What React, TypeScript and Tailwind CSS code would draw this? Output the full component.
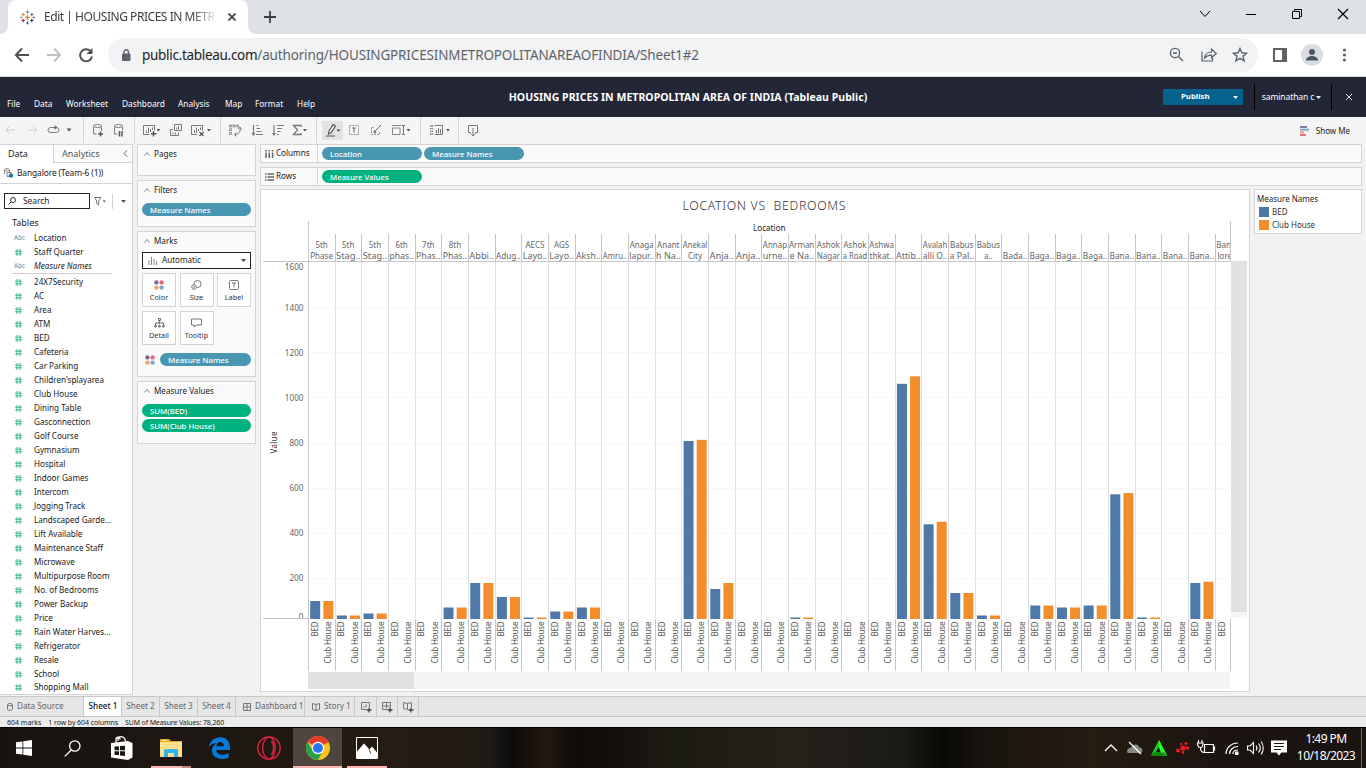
import React from "react";

const ui = "font-['Noto_Sans',sans-serif]";

const C = ({ className = "" }: { className?: string }) => (
  <svg width="5" height="3" viewBox="0 0 5 3" className={className}><path d="M0 0h5L2.500 3z" fill="currentColor" /></svg>
);

/* ---------- browser frame ---------- */

function TableauLogo() {
  const plus = (x: number, y: number, r: number, c: string, w = 1.4) => (
    <path d={`M${x - r} ${y}h${2 * r}M${x} ${y - r}v${2 * r}`} stroke={c} strokeWidth={w} />
  );
  return (
    <svg width="15" height="15" viewBox="0 0 15 15" fill="none">
      {plus(7.5, 7.5, 2.2, "#e8762d", 1.3)}
      {plus(7.5, 2, 1.6, "#5b879b", 1)}
      {plus(7.5, 13, 1.6, "#5b6591", 1)}
      {plus(3.2, 4.5, 1.7, "#eb912c", 1.2)}
      {plus(11.8, 4.5, 1.7, "#59879b", 1.2)}
      {plus(3.2, 10.5, 1.7, "#c72035", 1.2)}
      {plus(11.8, 10.5, 1.7, "#1f447e", 1.2)}
      {plus(1.2, 7.5, 1.1, "#7199a6", 0.9)}
      {plus(13.8, 7.5, 1.1, "#5c6692", 0.9)}
    </svg>
  );
}

function TabStrip() {
  return (
    <div className="flex h-[34px] shrink-0 bg-[#dee1e6]">
      <div className="w-2 bg-white"><div className="h-full rounded-br-lg bg-[#dee1e6]" /></div>
      <div className="flex w-[240px] items-center rounded-t-lg bg-white pl-3">
        <TableauLogo />
        <div className="ml-[9px] w-[172px] whitespace-nowrap text-[12px] tracking-[-0.46px] text-[#3c4043] [mask-image:linear-gradient(to_right,black_148px,transparent_174px)]">
          Edit | HOUSING PRICES IN METR
        </div>
        <svg width="8" height="8" viewBox="0 0 8 8" className="ml-[12px]"><path d="M.5 .5l7 7M7.500 .5l-7 7" stroke="#3c4043" strokeWidth="1.700" /></svg>
      </div>
      <div className="w-2 bg-white"><div className="h-full rounded-bl-lg bg-[#dee1e6]" /></div>
      <div className="flex flex-1 items-center pl-2">
        <svg width="12" height="12" viewBox="0 0 12 12"><path d="M6 0v12M0 6h12" stroke="#3c4043" strokeWidth="1.800" /></svg>
      </div>
      <div className="flex h-7 w-[184px] items-center text-black">
        <svg width="46" height="12" viewBox="0 0 46 12" fill="none" stroke="currentColor"><path d="M18 3l5 5.500 5-5.500" /></svg>
        <svg width="46" height="12" viewBox="0 0 46 12" fill="none" stroke="currentColor"><path d="M18 6.500h10" /></svg>
        <svg width="46" height="12" viewBox="0 0 46 12" fill="none" stroke="currentColor"><path d="M18.500 3.500h7v7h-7zM20.500 3.500v-2h7v7h-2" /></svg>
        <svg width="46" height="12" viewBox="0 0 46 12" fill="none" stroke="currentColor" strokeWidth="1.200"><path d="M18 1l10 10M28 1l-10 10" /></svg>
      </div>
    </div>
  );
}

function AddressBar() {
  return (
    <div className="flex h-[43px] shrink-0 items-center border-b border-[#d5d8dc] bg-white text-[#5f6368]">
      <svg width="108" height="20" viewBox="0 0 108 20" fill="none" strokeWidth="1.900">
        <path d="M29 10H16M22 3.500L15.800 10l6.200 6.500" stroke="#4d5156" />
        <path d="M47 10h13M54 3.500L60.200 10 54 16.500" stroke="#bdc1c6" />
        <path d="M91 6.800A6 6 0 1 0 92 11.500" stroke="#4d5156" />
        <path d="M92.500 3v6h-6z" fill="#4d5156" />
      </svg>
      <div className="flex h-[34px] w-[1150px] items-center rounded-full bg-[#f1f3f4] pl-[13px] pr-2">
        <svg width="10" height="13" viewBox="0 0 10 13"><rect x="1" y="4.500" width="8.500" height="7.500" rx="1" fill="#5f6368" /><path d="M3 5V3a2.200 2.200 0 0 1 4.400 0v2" fill="none" stroke="#5f6368" strokeWidth="1.400" /></svg>
        <div className="ml-[11px] flex-1 whitespace-nowrap text-[13.5px] tracking-[-0.15px] text-[#5f6368]">
          <span className="tracking-[-0.3px] text-[#202124]">public.tableau.com</span>/authoring/HOUSINGPRICESINMETROPOLITANAREAOFINDIA/Sheet1#2
        </div>
        <svg width="84" height="18" viewBox="0 0 84 18" fill="none" stroke="#5f6368" strokeWidth="1.400">
          <circle cx="9" cy="7" r="4.600" /><path d="M12.500 10.500l4.500 4.500M7 7h4" />
          <path d="M36 5.500v9.500h10.500v-3" strokeWidth="1.200" /><path d="M38.500 12c.5-4 3-6 7-6V3.200l4.800 4.300-4.800 4.300V9.200c-3 0-5 .5-7 2.800z" strokeWidth="1.200" />
          <path d="M74 2.500l1.900 4.300 4.600.4-3.500 3.100 1.100 4.600L74 12.400l-4.100 2.500 1.100-4.600-3.500-3.100 4.600-.4z" />
        </svg>
      </div>
      <svg width="108" height="24" viewBox="0 0 108 24">
        <rect x="16" y="6" width="12" height="12" fill="none" stroke="#5f6368" strokeWidth="2" /><path d="M24 5h5v14h-5z" fill="#5f6368" />
        <circle cx="54" cy="12" r="11" fill="#dadce0" /><circle cx="54" cy="9" r="3" fill="#4a5568" /><path d="M48 17.500c0-6 12-6 12 0z" fill="#4a5568" />
        <g fill="#5f6368"><circle cx="86.500" cy="7" r="1.600" /><circle cx="86.500" cy="12" r="1.600" /><circle cx="86.500" cy="17" r="1.600" /></g>
      </svg>
    </div>
  );
}

/* ---------- application header ---------- */

function Header() {
  return (
    <div className="flex h-[40px] shrink-0 bg-[#232636] text-white">
      <div className="flex w-[509px] items-end pb-[7px] pl-[7px] text-[8.3px] leading-3">
        <span className="w-[27px]">File</span><span className="w-[32px]">Data</span><span className="w-[56px]">Worksheet</span>
        <span className="w-[56px]">Dashboard</span><span className="w-[47px]">Analysis</span><span className="w-[30px]">Map</span>
        <span className="w-[42px]">Format</span><span>Help</span>
      </div>
      <div className="flex w-[358px] items-center justify-center whitespace-nowrap pt-[2px] text-[10.5px] font-bold tracking-[0.04px]">
        HOUSING PRICES IN METROPOLITAN AREA OF INDIA (Tableau Public)
      </div>
      <div className="flex flex-1 items-center pl-[296px] text-[8.5px]">
        <div className="flex h-4 w-20 shrink-0 items-center rounded-[1px] bg-[#04628c] pl-[18px] text-[7.8px] font-bold">
          <span className="w-[52px]">Publish</span><C />
        </div>
        <div className="ml-[11px] flex h-[26px] w-[78px] items-center justify-center border-x border-black pr-[3px] tracking-[-0.1px]">
          saminathan c<C className="ml-[2px]" />
        </div>
        <svg width="8" height="8" viewBox="0 0 8 8" className="mb-px ml-[13px]"><path d="M1 1l6 6M7 1l-6 6" stroke="#ddd" /></svg>
      </div>
    </div>
  );
}

const Ic = ({ w, children, o }: { w: number; children: React.ReactNode; o?: string }) => (
  <svg width={w} height="16" viewBox={`0 0 ${w} 16`} fill="none" stroke="#7a7a7a" className={`shrink-0 ${o ?? ""}`}>{children}</svg>
);
const tri = (x: number) => <path d={`M${x} 7h4l-2 2.500z`} fill="#555" stroke="none" />;

function Toolbar() {
  return (
    <div className="flex h-[26px] shrink-0 items-center bg-[#f5f5f5]">
      <Ic w={83}>
        <path d="M6 8h9M9.500 4.500L6 8l3.500 3.500M28 8h9M33.500 4.500L37 8l-3.500 3.500" stroke="#ccc" />
        <path d="M55 5.500h-4.500a2.500 2.500 0 0 0 0 5h6a2.500 2.500 0 0 0 1.500-4.500" /><path d="M54.500 3.200l3.500 2.300-3.500 2.300z" fill="#6e6e6e" stroke="none" />
        <path d="M66.500 6.500h5l-2.500 3z" fill="#555" stroke="none" />
      </Ic>
      <div className="h-full w-px bg-[#d4d4d4]" />
      <Ic w={50}>
        <path d="M9.500 4.500v7.500h3M17.500 4.500v4" /><ellipse cx="13.500" cy="4" rx="4" ry="1.500" /><path d="M16.500 9.500v5M14 12h5" strokeWidth="1.400" stroke="#555" />
        <path d="M30.500 4.500v7.500h3M38.500 4.500v3.500" /><ellipse cx="34.500" cy="4" rx="4" ry="1.500" /><path d="M35.500 9v5.500M38 9v5.500" strokeWidth="1.500" stroke="#555" />
      </Ic>
      <div className="h-full w-px bg-[#d4d4d4]" />
      <Ic w={85}>
        <path d="M14 12.500H8.500v-9h11v5M11.500 11V8.500M13.500 11V5.500M15.500 10V7M17.500 8V5.500" /><path d="M18.500 9v5.500M16 11.800h5.500" strokeWidth="1.400" stroke="#555" />{tri(21.5)}
        <path d="M39.500 2.500h7v6h-7zM41.500 7.500V5.500M43.500 7.500V4" /><path d="M38 7.500h-2.500v6h8v-3M38 12.500V10.500M40.500 12.500V10.500" />
        <path d="M62 12.500h-5.500v-9h11v5M59.500 11V8M61.500 11V5.500M63.500 9V7M65.500 8V5.500" /><path d="M64.500 10l4 4M68.500 10l-4 4" strokeWidth="1.200" stroke="#555" />{tri(72)}
      </Ic>
      <div className="h-full w-px bg-[#d4d4d4]" />
      <Ic w={95}>
        <path d="M8.500 3h2v2h-2zM12 3h2v2h-2zM15.500 3h2v2h-2zM8.500 6.800h2v2h-2zM8.500 10.500h2v2h-2z" strokeWidth=".8" /><path d="M18.800 5.500a5 5 0 0 1-4.800 7M17 7l2-2 1.500 2.300M15.500 10.500l-2 2 2 2" />
        <path d="M32.500 3v9.500M31 11l1.500 2 1.500-2M35.500 3.500h2M35.500 6.500h3.500M35.500 9.500h5M35 12.500h7" strokeWidth="1.200" />
        <path d="M53 3v9.500M51.500 11l1.500 2 1.500-2M56 3.500h7M56 6.500h5M56 9.500h3.500M56 12.500h2" strokeWidth="1.200" />
        <path d="M80 5V3.500h-7.500l4 4.500-4 4.500H80V11" strokeWidth="1.300" />{tri(82)}
      </Ic>
      <div className="mr-[5px] h-full w-px bg-[#d4d4d4]" />
      <Ic w={21} o="bg-[#e3e3e3] h-[19px]">
        <path d="M7 8.500l4-6.500 2.500 1.500-4 6.500-3 1.500zM4 13.500h9" strokeWidth="1.100" stroke="#555" />{tri(14.5)}
      </Ic>
      <Ic w={77}>
        <path d="M6.500 3.500h9v9h-9z" strokeDasharray="2 1" strokeWidth=".8" /><path d="M9 6h4M11 6v4.500" strokeWidth="1.200" />
        <path d="M28.500 6v6.500h8V9M28.500 5.500h3" strokeDasharray="2 1" strokeWidth=".8" /><path d="M32 9.500l6-6.500M31.500 8.500l1.500 2-2 .5z" stroke="#666" />
        <path d="M49.500 6h7.500v6.500h-7.500zM49 3.500h9.500" strokeWidth=".9" /><path d="M60.500 4v8.500M59 3.500h3M59 12.500h3" />{tri(63.5)}
      </Ic>
      <div className="h-full w-px bg-[#d4d4d4]" />
      <Ic w={37}>
        <path d="M9 4h3M9 6.700h3M9 9.400h3M9 12h3" strokeWidth="1.300" strokeDasharray="1.300 .4" /><path d="M13.500 3.500h8v9h-8M15.500 11.500V8M17.500 11.500V6M19.500 11.500V7" />{tri(25)}
      </Ic>
      <div className="h-full w-px bg-[#d4d4d4]" />
      <Ic w={30}>
        <path d="M12 10.500H9.500v-7h9v7H16M14 6v7.500M11.800 11.500l2.200 2.500 2.200-2.500" />
      </Ic>
      <div className="ml-auto flex items-center pr-4 pt-px text-[8px] text-[#222]">
        <svg width="10" height="10" viewBox="0 0 10 10" className="mr-1.5"><path d="M0 0h7v2H0z" fill="#8a7b9c" /><path d="M0 2.700h9v2H0z" fill="#7da6ca" /><path d="M0 5.400h4v2H0z" fill="#f2a478" /><path d="M0 8h6v2H0z" fill="#ed6d7e" /></svg>
        Show Me
      </div>
    </div>
  );
}

/* ---------- data pane ---------- */

const measures = [
  "24X7Security", "AC", "Area", "ATM", "BED", "Cafeteria", "Car Parking", "Children'splayarea", "Club House", "Dining Table",
  "Gasconnection", "Golf Course", "Gymnasium", "Hospital", "Indoor Games", "Intercom", "Jogging Track", "Landscaped Garde...",
  "Lift Available", "Maintenance Staff", "Microwave", "Multipurpose Room", "No. of Bedrooms", "Power Backup", "Price",
  "Rain Water Harves...", "Refrigerator", "Resale", "School", "Shopping Mall",
];

function Field({ name, abc, italic }: { name: string; abc?: boolean; italic?: boolean }) {
  return (
    <div className="flex h-[14px] items-center whitespace-nowrap text-[8.1px] leading-[14px] text-[#222] last:-mt-px">
      <div className="flex w-[34px] shrink-0 pl-[14px]">
        {abc ? <span className="text-[6.3px] text-[#4996b2]">Abc</span> : (
          <svg width="8" height="7" viewBox="0 0 8 7"><path d="M3 0v7M6 0v7M1 2.200h7M1 4.800h7" stroke="#12b188" strokeWidth=".85" /></svg>
        )}
      </div>
      <span className={italic ? "italic" : ""}>{name}</span>
    </div>
  );
}

function DataPane() {
  return (
    <div className="flex h-[551px] w-[133px] shrink-0 flex-col overflow-hidden border-b border-r border-[#d4d4d4] bg-white text-[#222]">
      <div className="flex h-[19px] shrink-0 border-t border-[#d4d4d4] text-[9px]">
        <div className="flex w-[53px] items-center pl-2">Data</div>
        <div className="flex flex-1 items-center border-b border-l border-[#d4d4d4] bg-[#fafafa] pl-2 text-[#555]">
          Analytics
          <svg width="5" height="7" viewBox="0 0 5 7" className="ml-auto mr-1" fill="none"><path d="M4 .5l-3 3 3 3" stroke="#666" /></svg>
        </div>
      </div>
      <div className="flex h-[21px] shrink-0 items-center border-b border-[#d4d4d4] pl-1 text-[8.4px]">
        <svg width="10" height="10" viewBox="0 0 10 10" fill="none" stroke="#888"><ellipse cx="3" cy="1.800" rx="2.500" ry="1.200" /><path d="M.5 2v4M5.500 2v2" /><path d="M3 4.500h4v4H3z" /><circle cx="7" cy="7.500" r="2.300" fill="#2b78b4" stroke="none" /></svg>
        <span className="ml-[3px] whitespace-nowrap tracking-[-0.1px]">Bangalore (Team-6 (1))</span>
      </div>
      <div className="mt-[9px] flex h-4 shrink-0 items-center pl-1">
        <div className="flex h-4 w-[86px] items-center border border-[#222] pl-[3px] text-[8.3px]">
          <svg width="8" height="8" viewBox="0 0 8 8" fill="none" stroke="#333"><circle cx="5" cy="3" r="2.500" /><path d="M3.200 4.800L.5 7.500" /></svg>
          <span className="ml-[7px]">Search</span>
        </div>
        <svg width="33" height="16" viewBox="0 0 33 16" fill="none" stroke="#777" className="shrink-0"><path d="M4.500 4.500h6.500L8.700 8v4l-2-1.500V8z" /><path d="M12.500 7.500h3.500l-1.700 2z" fill="#666" stroke="none" /><path d="M22.500 1v15" stroke="#d4d4d4" /></svg>
        <C className="-ml-[2px] shrink-0 text-[#555]" />
      </div>
      <div className="mt-[7px] shrink-0 pl-3 text-[9px] leading-[14px]">Tables</div>
      <div className="mt-px">
        <Field name="Location" abc />
        <Field name="Staff Quarter" />
        <Field name="Measure Names" abc italic />
        <div className="ml-3 h-[2px] w-[100px] border-t border-[#d0d0d0]" />
        {measures.map((m) => <Field key={m} name={m} />)}
      </div>
    </div>
  );
}

/* ---------- cards ---------- */

function Card({ title, className, children }: { title: string; className: string; children?: React.ReactNode }) {
  return (
    <div className={`w-[119px] shrink-0 border border-[#d4d4d4] bg-[#fafafa] px-[4px] ${className}`}>
      <div className="flex h-[18px] items-center text-[8.1px] text-[#222]">
        <svg width="6" height="4" viewBox="0 0 6 4" fill="none" className="ml-[2px] mr-1"><path d="M.5 3.500l2.500-3 2.500 3" stroke="#777" strokeWidth=".9" /></svg>
        {title}
      </div>
      {children}
    </div>
  );
}

const Pill = ({ text, className }: { text: string; className: string }) => (
  <div className={`flex h-[13px] shrink-0 items-center rounded-full pl-2 text-[7.8px] font-medium leading-[13px] text-white ${className}`}>
    <span className="whitespace-nowrap pt-px">{text}</span>
  </div>
);

const Dots = () => (
  <svg width="10" height="10" viewBox="0 0 10 10"><circle cx="2.400" cy="2.400" r="2.200" fill="#7b6a93" /><circle cx="7.600" cy="2.400" r="2.200" fill="#ed6577" /><circle cx="2.400" cy="7.600" r="2.200" fill="#f2a06e" /><circle cx="7.600" cy="7.600" r="2.200" fill="#7ca5cf" /></svg>
);

const Btn = ({ label, children }: { label: string; children: React.ReactNode }) => (
  <div className="flex h-[34px] w-[34px] flex-col items-center border border-[#d4d4d4] bg-white pt-[6px] text-[7.3px] leading-[10px] text-[#333]">
    <div className="flex h-[10px] items-center">{children}</div>
    <span className="mt-[2px]">{label}</span>
  </div>
);

function Cards() {
  return (
    <div className="ml-1 flex w-[119px] shrink-0 flex-col">
      <Card title="Pages" className="h-8" />
      <Card title="Filters" className="mt-[4px] h-[47px]"><Pill text="Measure Names" className="mt-[4px] bg-[#4996b2]" /></Card>
      <Card title="Marks" className="mt-[4px] h-[146px]">
        <div className="mt-[2px] flex h-[17px] items-center border border-[#222] bg-white pl-[5px] pr-1 text-[8.1px] text-[#222]">
          <svg width="9" height="9" viewBox="0 0 9 9" stroke="#888"><path d="M1 9V4M3.500 9V1M6 9V3M8.500 9V5" /></svg>
          <span className="ml-[5px] flex-1">Automatic</span><C className="text-[#444]" />
        </div>
        <div className="mt-[4px] grid grid-cols-[34px_34px_34px] gap-x-[3.5px] gap-y-1">
          <Btn label="Color"><Dots /></Btn>
          <Btn label="Size"><svg width="11" height="10" viewBox="0 0 11 10" fill="none" stroke="#777"><circle cx="6.500" cy="4" r="3.500" /><circle cx="3" cy="7" r="2.300" fill="#fff" /><circle cx="3" cy="7" r=".4" /></svg></Btn>
          <Btn label="Label"><svg width="10" height="10" viewBox="0 0 10 10" fill="none" stroke="#777"><rect x=".5" y=".5" width="9" height="9" rx="1" /><path d="M3 3h4M5 3v4.500" /></svg></Btn>
          <Btn label="Detail"><svg width="11" height="10" viewBox="0 0 11 10" fill="none" stroke="#666"><path d="M4.500 .5h2v2h-2zM5.500 3v3M1.500 7V5h8v2M.8 7.500h1.500v1.500H.8zM4.700 7.500h1.500v1.500H4.700zM8.700 7.500h1.500v1.500H8.700z" /></svg></Btn>
          <Btn label="Tooltip"><svg width="11" height="10" viewBox="0 0 11 10" fill="none" stroke="#777"><path d="M.5 1h10v6H5.500l-2 2V7h-3z" /></svg></Btn>
        </div>
        <div className="mt-[8px] flex items-center pl-[3px]"><Dots /><Pill text="Measure Names" className="ml-[5px] w-[91px] bg-[#4996b2]" /></div>
      </Card>
      <Card title="Measure Values" className="mt-[4px] h-[63px]">
        <Pill text="SUM(BED)" className="mt-[4px] bg-[#00b180]" /><Pill text="SUM(Club House)" className="mt-[2px] bg-[#00b180]" />
      </Card>
    </div>
  );
}

/* ---------- chart ---------- */

const cols: [string, string, number?, number?][] = [
  ["5th", "Phase", 601, 601], ["5th", "Stag..", 615.5, 615.5], ["5th", "Stag..", 613.5, 613.5], ["6th", "phas.."], ["7th", "Phas.."],
  ["8th", "Phas..", 607.5, 607.5], ["", "Abbi..", 583, 583], ["", "Adug..", 597, 597], ["AECS", "Layo..", 617.5, 617.5], ["AGS", "Layo..", 611.5, 611.5],
  ["", "Aksh..", 607.5, 607.5], ["", "Amru.."], ["Anaga", "lapur.."], ["Anant", "h Na.."], ["Anekal", "City", 441, 439.8],
  ["", "Anja..", 589, 583], ["", "Anja.."], ["Annap", "urne.."], ["Arman", "e Na..", 617.5, 617.5], ["Ashok", "Nagar"],
  ["Ashok", "a Road"], ["Ashwa", "thkat.."], ["", "Attib..", 383.8, 376.3], ["Avalah", "alli O..", 524.3, 521.7], ["Babus", "a Pal..", 593, 593],
  ["Babus", "a..", 615.5, 615.5], ["", "Bada.."], ["", "Baga..", 605.5, 605.5], ["", "Baga..", 607.5, 607.5], ["", "Baga..", 605.5, 605.5],
  ["", "Bana..", 494.3, 493], ["", "Bana..", 617.5, 617.5], ["", "Bana.."], ["", "Bana..", 583, 581.7],
];
const pitch = 26.67;
const ticks = [200, 400, 600, 800, 1000, 1200, 1400];

function Chart() {
  const cx = (i: number) => 308.3 + i * pitch;
  return (
    <svg width="988" height="501" viewBox="261 190 988 501" className="block" fontSize="8">
      <text x="682.500" y="210" fontSize="12.300" fontWeight="300" fill="#333" textLength="163" xmlSpace="preserve">{"LOCATION VS  BEDROOMS"}</text>
      <text x="753" y="231" fill="#222" textLength="32.500">Location</text>
      <text x="0" y="0" fill="#333" transform="translate(277.300 453.500) rotate(-90)" textLength="22">Value</text>
      {ticks.map((t) => <path key={t} d={`M309 ${Math.floor(623.4 - t * 0.2255) + 0.5}H1230`} stroke="#f7f7f7" />)}
      {cols.map((_, i) => {
        const x = Math.round(cx(i + 1) - 0.3) + 0.5;
        return <g key={i}><path d={`M${x} 234V261M${x} 619V671`} stroke="#c6c6c6" /><path d={`M${x} 262V618`} stroke="#e0e0e0" /></g>;
      })}
      <path d="M308.500 221V671M1230.500 221V261M1230.500 619V671M263 261.500H1230.500" stroke="#c6c6c6" fill="none" />
      <path d="M263 618.500H309" stroke="#c6c6c6" />
      <g fill="#666" textAnchor="end" fontSize="8.200">
        <text x="303.500" y="270">1600</text>
        {ticks.map((t) => <text key={t} x="303.500" y={626.4 - t * 0.2255}>{t}</text>)}
        <clipPath id="zero"><path d="M290 600h18v18h-18z" /></clipPath>
        <text x="303.500" y="620" clipPath="url(#zero)">0</text>
      </g>
      {cols.map(([a, b, blue, orange], i) => {
        const x = cx(i);
        const wide = (s: string) => (s.length > 5 ? { textLength: 24.5, lengthAdjust: "spacingAndGlyphs" as const } : {});
        return (
          <g key={i}>
            <g fill="#666" textAnchor="middle">
              {a && <text x={x + 13.3} y="248" {...wide(a)}>{a}</text>}
              <text x={x + 13.3} y="259" {...wide(b)}>{b}</text>
            </g>
            {blue && <rect x={x + 1.9} y={blue} width="10" height={619 - blue} fill="#4e79a7" />}
            {orange && <rect x={x + 15} y={orange} width="10" height={619 - orange} fill="#f28e2b" />}
            <g fill="#555" fontSize="8">
              <text transform={`translate(${x + 9.5} 636.500) rotate(-90)`} textLength="15">BED</text>
              <text transform={`translate(${x + 22.8} 663.500) rotate(-90)`} textLength="42">Club House</text>
            </g>
          </g>
        );
      })}
      <clipPath id="last"><path d="M1215 234h15v27h-15z" /></clipPath>
      <g fill="#666" clipPath="url(#last)"><text x="1216.200" y="248">Bang</text><text x="1217.500" y="259">lore</text></g>
      <text transform="translate(1224.500 636.500) rotate(-90)" textLength="15" fontSize="8" fill="#555">BED</text>
      <path d="M1231 261h16v351h-16zM308 672h106v17H308z" fill="#e1e1e1" />
      <path d="M1231 612h16v6h-16zM414 672h816v17H414z" fill="#f5f5f5" />
    </svg>
  );
}

function Shelf({ label, rows, children }: { label: string; rows?: boolean; children: React.ReactNode }) {
  return (
    <div className="flex h-[19px] w-[1102px] shrink-0 border border-[#d4d4d4] bg-[#fafafa]">
      <div className="flex w-[57px] items-center border-r border-[#d4d4d4] pl-[4px] text-[8.1px] text-[#222]">
        <svg width="9" height="8" viewBox="0 0 9 8" stroke="#666" fill="none" className="mr-[2px]">
          {rows ? <path d="M0 1h1.500M2.500 1H9M0 4h1.500M2.500 4H9M0 7h1.500M2.500 7H9" strokeWidth="1.300" /> : <path d="M1 0v1.500M1 2.500V8M4.300 0v1.500M4.300 2.500V8M7.600 0v1.500M7.600 2.500V8" strokeWidth="1.500" />}
        </svg>
        {label}
      </div>
      <div className="flex items-center gap-[2px] pl-1">{children}</div>
    </div>
  );
}

function Workspace() {
  return (
    <div className="ml-1 flex flex-1 flex-col">
      <Shelf label="Columns"><Pill text="Location" className="w-[100px] bg-[#4996b2]" /><Pill text="Measure Names" className="w-[100px] bg-[#4996b2]" /></Shelf>
      <div className="h-1" />
      <Shelf label="Rows" rows><Pill text="Measure Values" className="w-[100px] bg-[#00b180]" /></Shelf>
      <div className="mt-[3px] flex items-start gap-1">
        <div className="h-[503px] w-[990px] shrink-0 border border-[#d4d4d4] bg-white"><Chart /></div>
        <div className="h-[45px] w-[108px] border border-[#d4d4d4] bg-white pl-[2px] pt-[3px] text-[8px] leading-[11px] text-[#333]">
          <div className="text-[#222]">Measure Names</div>
          <div className="mt-[2px] flex items-center"><span className="ml-[2px] mr-[3px] h-[10px] w-[10px] bg-[#4e79a7]" />BED</div>
          <div className="mt-[2px] flex items-center"><span className="ml-[2px] mr-[3px] h-[10px] w-[10px] bg-[#f28e2b]" />Club House</div>
        </div>
      </div>
    </div>
  );
}

/* ---------- sheet tabs ---------- */

function SheetTabs() {
  const cell = "flex h-full shrink-0 items-center border-r border-[#c8c8c8]";
  const plus = <path d="M9 6.500v5M6.500 9h5" stroke="#444" strokeWidth="1.300" />;
  return (
    <div className="flex h-[21px] shrink-0 border-b border-t border-[#c8c8c8] bg-[#e6e6e6] text-[8.2px] text-[#666]">
      <div className={`${cell} w-[84px] pl-[7px]`}>
        <svg width="6" height="8" viewBox="0 0 6 8" fill="none" stroke="#777" className="mr-1"><ellipse cx="3" cy="1.700" rx="2.400" ry="1.200" /><path d="M.5 1.700v4.500c0 1.500 5 1.500 5 0V1.700" /></svg>Data Source
      </div>
      <div className={`${cell} w-[38px] justify-center bg-white pl-px font-medium text-[#111]`}>Sheet 1</div>
      <div className={`${cell} w-[38px] justify-center`}>Sheet 2</div>
      <div className={`${cell} w-[38px] justify-center`}>Sheet 3</div>
      <div className={`${cell} w-[38px] justify-center`}>Sheet 4</div>
      <div className={`${cell} w-[69px] whitespace-nowrap pl-[7px] tracking-[-0.08px]`}>
        <svg width="8" height="8" viewBox="0 0 8 8" fill="none" stroke="#777" className="mr-[4px] shrink-0"><path d="M.5 .5h7v7h-7zM4 .5v7M.5 4h7" /></svg>Dashboard 1
      </div>
      <div className={`${cell} w-[50px] whitespace-nowrap pl-[7px]`}>
        <svg width="8" height="8" viewBox="0 0 8 8" fill="none" stroke="#777" className="mr-1 shrink-0"><path d="M4 1.500L.5 .5v6L4 7.500l3.500-1v-6zM4 1.500v6" /></svg>Story 1
      </div>
      <div className={`${cell} w-[22px] justify-center`}><svg width="12" height="12" viewBox="0 0 12 12" fill="none" stroke="#777"><path d="M6 8.500H1.500v-7h8V6M4 6.500V5M6 6.500v-3" />{plus}</svg></div>
      <div className={`${cell} w-[21px] justify-center`}><svg width="12" height="12" viewBox="0 0 12 12" fill="none" stroke="#777"><path d="M6 8.500H1.500v-7h8V6M5.500 1.500v6M1.500 5h8" />{plus}</svg></div>
      <div className={`${cell} w-[21px] justify-center`}><svg width="12" height="12" viewBox="0 0 12 12" fill="none" stroke="#777"><path d="M5.500 2.500l-4-1v6l4 1v-6l4-1V6" />{plus}</svg></div>
    </div>
  );
}

/* ---------- taskbar ---------- */

const Slot = ({ children, className = "" }: { children: React.ReactNode; className?: string }) => (
  <div className={`flex h-full w-[49px] shrink-0 flex-col items-center ${className}`}>
    <div className="flex h-[38px] items-center pt-[2px]">{children}</div>
  </div>
);

function Taskbar() {
  return (
    <div className="flex h-[41px] shrink-0 border-t border-black bg-[linear-gradient(90deg,#17130f_0%,#1c1711_15%,#251c13_28%,#241c13_34%,#1b1a19_36%,#0c0a08_37.5%,#221811_40%,#0e0b09_42%,#14110e_46%,#1c1b10_49%,#24211a_58%,#1c1a17_66%,#080704_69%,#19140f_72%,#251c12_80%,#1b1310_90%,#1a1412_100%)] text-white">
      <div className="flex w-12 items-center justify-center">
        <svg width="16" height="16" viewBox="0 0 16 16" fill="#fff"><path d="M0 2.300l6.500-.9v6.200H0zM7.300 1.300L16 0v7.600H7.300zM0 8.400h6.500v6.200L0 13.700zM7.300 8.400H16V16l-8.700-1.300z" /></svg>
      </div>
      <Slot><svg width="17" height="17" viewBox="0 0 17 17" fill="none" stroke="#fff" strokeWidth="1.300"><circle cx="10.800" cy="6" r="5.200" /><path d="M7.200 10L.8 16.400" /></svg></Slot>
      <Slot>
        <svg width="22" height="24" viewBox="0 0 22 24"><path d="M0 7l17-2v19L0 21.500zM17 5l4.500 2v14.500L17 24z" fill="#fff" /><path d="M5 8V3.500C5 .5 9 .5 9 3.500M7 5V2.500c1-2.500 7-3 7.500 3" fill="none" stroke="#fff" strokeWidth="1.300" /><path d="M3.500 10.500l4.500-.3v4H3.500zM9 10.100l5-.4v4.500H9zM3.500 15.200H8v4l-4.500-.5zM9 15.200h5V20l-5-.6z" fill="#1c1711" /></svg>
      </Slot>
      <Slot className="bg-[linear-gradient(90deg,transparent_5px,#fcb5b0_5px,#fcb5b0_36px,#c08884_36px,#c08884_45px,transparent_45px)] bg-[length:100%_2px] bg-bottom bg-no-repeat">
        <svg width="22" height="18" viewBox="0 0 22 18"><path d="M0 0h9l2 2h11v5H0z" fill="#e8a817" /><path d="M0 3h22v15H0z" fill="#fde08b" /><path d="M2 1h5v1H2z" fill="#fff3c4" /><path d="M4 10.500L8 10h6l4 .5V18h-4v-4H8v4H4z" fill="#2eb3ee" /></svg>
      </Slot>
      <Slot>
        <svg width="22" height="22" viewBox="0 0 22 22"><path d="M0 9.500C1.200 4 5.500 .3 11 .3c7 0 10 5 10 10.500V13H7.200c.2 3.200 3 4.800 6.300 4.800 2.500 0 4.500-.7 6.200-1.800v4.400c-2 1-4.400 1.500-7 1.500C7 21.900 3 18.700 3 13.800c0-3.400 1.800-6 4.900-7.700C4.800 6.300 2 7.400 0 9.500zM7.300 9.200h7.500C14.800 6.700 13.600 5 11.200 5 9.200 5 7.600 6.700 7.300 9.200z" fill="#0879d8" /></svg>
      </Slot>
      <Slot>
        <svg width="24" height="24" viewBox="0 0 24 24" fill="none" stroke="#e0223f" strokeWidth="1.300"><circle cx="12" cy="12" r="11.200" /><ellipse cx="12" cy="12" rx="6.300" ry="10.800" /><path d="M14.500 5c3 4 3 10 0 14" strokeWidth="1.600" /></svg>
      </Slot>
      <Slot className="bg-[linear-gradient(to_top,#fcb5b0_2px,#4d453e_2px)]">
        <svg width="24" height="24" viewBox="0 0 24 24"><circle cx="12" cy="12" r="12" fill="#fcc31e" /><path d="M12 12L1.600 6A12 12 0 0 1 22.400 6z" fill="#e33b2e" /><path d="M12 6.300h10.500A12 12 0 0 0 12 0z" fill="#e33b2e" /><path d="M1.600 6A12 12 0 0 0 11.800 24l5.200-9-10.400-.5z" fill="#2aa04c" /><circle cx="12" cy="12" r="6.200" fill="#fff" /><circle cx="12" cy="12" r="5" fill="#2d75eb" /></svg>
      </Slot>
      <Slot className="bg-[linear-gradient(90deg,transparent_5px,#fcb5b0_5px,#fcb5b0_45px,transparent_45px)] bg-[length:100%_2px] bg-bottom bg-no-repeat">
        <svg width="22" height="22" viewBox="0 0 22 22"><path d="M.5 .5h21v21H.5z" fill="none" stroke="#fff" /><path d="M1 14.500l7-8 5.500 6L16 9.500l5 6V21H1z" fill="#fff" /><path d="M13 12.500l2 4" stroke="#1c1711" strokeWidth=".8" /></svg>
      </Slot>
      <div className="ml-auto flex w-[268px] items-center">
        <svg width="196" height="40" viewBox="1098 728 196 40" fill="none" stroke="#fff" strokeWidth="1.300" className="shrink-0">
          <path d="M1105 751l6-6 6 6" />
          <path d="M1127 751.500c0-3 3-4 4.500-4 1-4 7-4 8 0 3 0 4 4 1.500 5.500h-12c-1 0-2-.5-2-1.500z" fill="#8a8a88" stroke="none" /><path d="M1129 742l12 12" />
          <path d="M1159 740l8 15.500h-16zm-.2 7l-3.500 5.500h7z" fill="#12d816" fillRule="evenodd" stroke="none" /><path d="M1159 740l8 15.500h-5l-3-8z" fill="#2bfa22" stroke="none" /><path d="M1151 755.500h16l-3-3h-10z" fill="#0a8c12" stroke="none" />
          <g fill="#ee1c1c" stroke="none"><circle cx="1183" cy="748" r="2.600" /><circle cx="1178" cy="750.500" r="2" /><circle cx="1186" cy="743.500" r="1.600" /><circle cx="1181" cy="744" r="1.200" /><circle cx="1187.500" cy="748" r="1.800" /><circle cx="1183" cy="752.500" r="1.400" /></g>
          <path d="M1204.500 744.500h9v8h-9zM1214.500 746.500v4M1198.500 740v3M1202 740v3M1197.500 743h5.500c0 3.500-1 4.500-2.500 4.500-2 0-3-1-3-4.500zM1200.500 748c0 3 1 4.500 4 4.500" strokeWidth="1.200" />
          <path d="M1226 754c0-6 5-11 12-11M1229.500 754c0-4 3.500-7.500 8.500-7.500M1233 754c0-2.500 2-4 5-4" strokeWidth="1.200" /><path d="M1235 751.500h3.500v3.500H1235z" fill="#fff" stroke="none" />
          <path d="M1247.500 746h2.500l3.500-3.500v11l-3.500-3.500h-2.500zM1256 745.500c1.200 1.500 1.200 3.500 0 5M1258.500 743.500c2.200 2.800 2.200 6.200 0 9M1261 741.500c3 3.500 3 9.500 0 13" strokeWidth="1.100" />
          <path d="M1271 740.500h16v12h-5.500l-2.500 3-2.500-3h-5.500z" fill="#fff" stroke="none" /><path d="M1274 743.500h10M1274 746.500h10M1274 749.500h7" stroke="#1c1711" strokeWidth="1" />
        </svg>
        <div className="flex w-[64px] shrink-0 flex-col items-center pb-[3px] text-[12px] leading-[17px] tracking-[-0.55px]"><span>1:49 PM</span><span>10/18/2023</span></div>
        <div className="ml-[3px] h-full w-px bg-[#6b6660]" />
      </div>
    </div>
  );
}

export default function App() {
  return (
    <div className={`flex h-[768px] w-[1366px] flex-col overflow-hidden bg-[#f2f2f2] ${ui}`}>
      <TabStrip />
      <AddressBar />
      <Header />
      <Toolbar />
      <div className="flex h-[553px] shrink-0 items-start pt-px">
        <DataPane />
        <Cards />
        <Workspace />
      </div>
      <SheetTabs />
      <div className="flex h-[10px] shrink-0 items-center gap-[7px] whitespace-nowrap bg-[#ececec] pl-[7px] pt-px text-[7px] leading-[10px] text-[#222]">
        <span>604 marks</span><span className="tracking-[-0.08px]">1 row by 604 columns</span><span className="tracking-[-0.14px]">SUM of Measure Values: 78,260</span>
      </div>
      <Taskbar />
    </div>
  );
}
